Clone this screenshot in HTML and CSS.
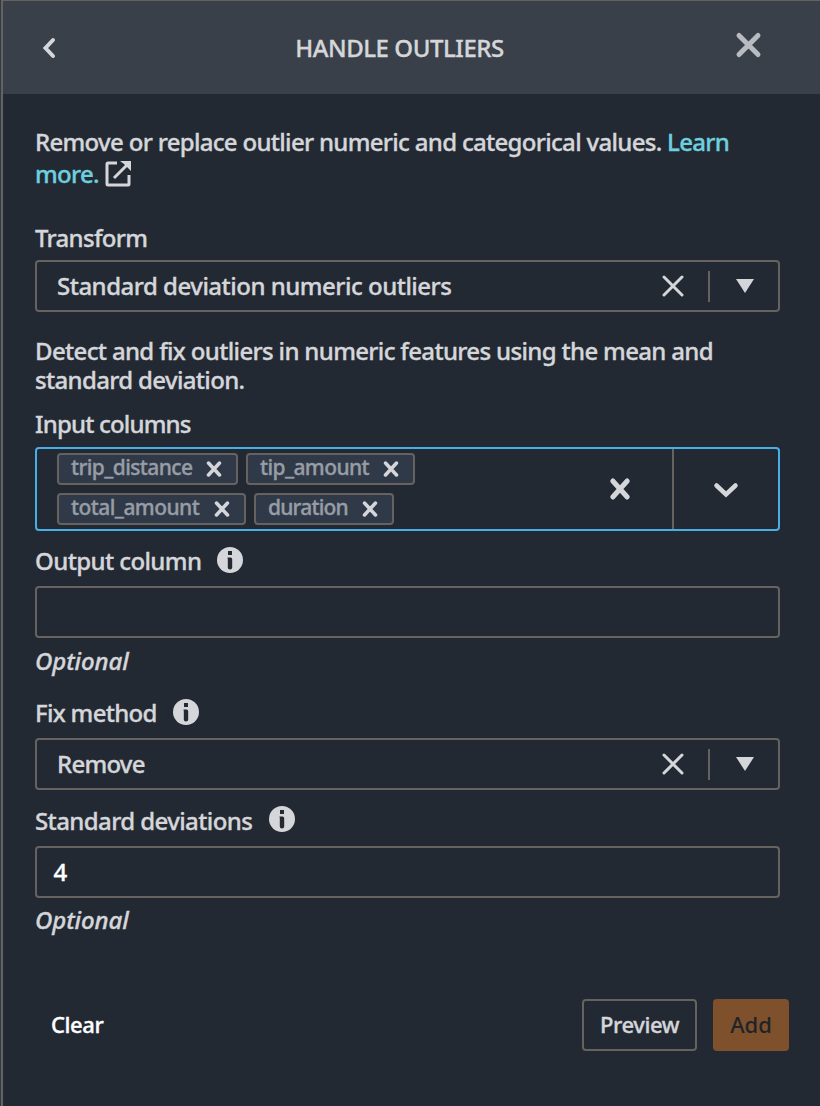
FILE: index.html
```
<!DOCTYPE html>
<html lang="en">
<head>
<meta charset="utf-8">
<title>Handle outliers</title>
<link rel="stylesheet" href="styles.css">
</head>
<body>
<main class="panel">
  <header class="header">
    <svg class="back" width="16" height="24" viewBox="0 0 16 24"><path d="M12 4 4.500 12l7.500 8"/></svg>
    <h1 class="title">HANDLE OUTLIERS</h1>
    <svg class="close" width="28" height="28" viewBox="0 0 28 28"><path d="m5 4.500 19 19m0-19-19 19"/></svg>
  </header>
  <form class="content">
    <p class="intro">Remove or replace outlier numeric and categorical values. <a class="link">Learn<br>more.</a><svg class="external" width="26" height="26" viewBox="0 0 26 26"><path d="M12 2H3Q2 2 2 3V23Q2 24 3 24H23Q24 24 24 23V14M9 17 22 4"/><path class="tip" d="M15 0h11v10l-3-3-4-4z"/></svg></p>

    <label class="label label-transform">Transform</label>
    <div class="box select">
      <span class="value value-transform">Standard deviation numeric outliers</span>
      <svg class="clear" width="22" height="22" viewBox="0 0 22 22"><path d="m2 2 18 18m0-18L2 20"/></svg>
      <i class="rule"></i>
      <svg class="arrow" width="18" height="14" viewBox="0 0 18 14"><path d="M0 0h18L9 14z"/></svg>
    </div>

    <p class="detail">Detect and fix outliers in numeric features using the mean and<br>standard deviation.</p>

    <label class="label label-input">Input columns</label>
    <div class="box multi">
      <div class="chips">
        <span class="chip chip-trip"><span class="chip-text">trip_distance</span><svg width="16" height="16" viewBox="0 0 16 16"><path d="m2.500 2 11 12m0-12-11 12"/></svg></span>
        <span class="chip chip-tip"><span class="chip-text">tip_amount</span><svg width="16" height="16" viewBox="0 0 16 16"><path d="m2.500 2 11 12m0-12-11 12"/></svg></span>
        <span class="chip chip-total"><span class="chip-text">total_amount</span><svg width="16" height="16" viewBox="0 0 16 16"><path d="m2.500 2 11 12m0-12-11 12"/></svg></span>
        <span class="chip chip-duration"><span class="chip-text">duration</span><svg width="16" height="16" viewBox="0 0 16 16"><path d="m2.500 2 11 12m0-12-11 12"/></svg></span>
      </div>
      <svg class="clear-all" width="22" height="24" viewBox="0 0 22 24"><path d="m3.800 4 14.400 16m0-16-14.400 16"/></svg>
      <div class="toggle"><svg width="26" height="18" viewBox="0 0 26 18"><path d="m3.500 4.500 9.500 9 9.500-9"/></svg></div>
    </div>

    <label class="label label-output"><span>Output column</span><svg class="info" width="26" height="26" viewBox="0 0 26 26"><circle cx="13" cy="13" r="13"/><path d="M11 4h4v4h-4zM10.500 10.500h3q1.700 0 1.700 1.700v8.300q0 2-2.200 2t-2.200-2v-8z"/></svg></label>
    <div class="box"></div>
    <p class="hint">Optional</p>

    <label class="label label-fix"><span>Fix method</span><svg class="info" width="26" height="26" viewBox="0 0 26 26"><circle cx="13" cy="13" r="13"/><path d="M11 4h4v4h-4zM10.500 10.500h3q1.700 0 1.700 1.700v8.300q0 2-2.200 2t-2.200-2v-8z"/></svg></label>
    <div class="box select">
      <span class="value value-fix">Remove</span>
      <svg class="clear" width="22" height="22" viewBox="0 0 22 22"><path d="m2 2 18 18m0-18L2 20"/></svg>
      <i class="rule"></i>
      <svg class="arrow" width="18" height="14" viewBox="0 0 18 14"><path d="M0 0h18L9 14z"/></svg>
    </div>

    <label class="label label-std"><span>Standard deviations</span><svg class="info" width="26" height="26" viewBox="0 0 26 26"><circle cx="13" cy="13" r="13"/><path d="M11 4h4v4h-4zM10.500 10.500h3q1.700 0 1.700 1.700v8.300q0 2-2.200 2t-2.200-2v-8z"/></svg></label>
    <div class="box number">4</div>
    <p class="hint hint-last">Optional</p>

    <div class="actions">
      <span class="button button-clear">Clear</span>
      <span class="button button-preview">Preview</span>
      <span class="button button-add">Add</span>
    </div>
  </form>
</main>
</body>
</html>
```
FILE: styles.css
```
* { box-sizing: border-box; }
html { background: #2e3a48; }
body { margin: 0; }
svg { display: block; flex: none; fill: none; stroke: #d5d6d9; stroke-width: 3; }
.panel {
  width: 819px; height: 1106px; overflow: hidden;
  background: #222933;
  border-left: 2px solid #66625f;
  margin-left: 1px;
  font: 500 24px/28px "Noto Sans", sans-serif;
  -webkit-text-stroke: 0.35px currentColor;
  color: #d5d6d9; white-space: nowrap;
}
.header {
  display: flex; align-items: center; justify-content: space-between;
  width: 817px; height: 94px; padding: 0 58px 0 38px;
  background: #394049; border-top: 1px solid #66625f;
}
.back { stroke-width: 4; stroke-linecap: round; }
.title { margin: 0 0 0 8px; font-size: 24px; font-weight: 500; letter-spacing: -0.45px; }
.close { stroke: #b8bbc2; stroke-width: 5; stroke-linecap: round; margin-top: -6px; }
.content { display: flex; flex-direction: column; width: 777px; padding: 32px 0 0 32px; }
p { margin: 0; }
.intro { height: 98px; line-height: 32px; letter-spacing: -0.69px; }
.link { color: #6fcfdf; }
.external { display: inline-block; vertical-align: -4px; margin-left: 6px; }
.external .tip { fill: #d5d6d9; stroke: none; }
.label { display: flex; height: 28px; align-items: center; letter-spacing: -0.6px; }
.label-transform { margin-bottom: 8px; letter-spacing: -0.7px; }
.box { width: 745px; height: 52px; flex: none; border: 2px solid #66625f; border-radius: 4px; }
.select { display: flex; align-items: center; padding-left: 20px; }
.value { flex: 1; letter-spacing: -0.5px; }
.value-fix { letter-spacing: -0.75px; }
.clear { margin-right: 24px; stroke-linecap: round; }
.rule { width: 2px; height: 31px; background: #66625f; margin-right: 26px; }
.arrow { fill: #d5d6d9; stroke: none; margin-right: 24px; }
.detail { height: 58px; margin: 24px 0 16px; line-height: 29px; letter-spacing: -0.66px; }
.label-input { margin-bottom: 9px; letter-spacing: -0.82px; }
.multi { display: flex; align-items: center; height: 84px; border-color: #48aee6; }
.chips { display: flex; flex-wrap: wrap; gap: 8px; width: 400px; padding-left: 20px; }
.chip {
  display: flex; align-items: center; justify-content: space-between;
  height: 32px; padding: 0 14px 0 12px; border: 2px solid #66625f; border-radius: 4px;
  background: #303948; color: #979da5; font-size: 21px; line-height: 28px;
  letter-spacing: -0.6px;
}
.chip-text { margin-top: -5px; }
.chip svg { stroke-width: 3.500; stroke-linecap: round; margin-top: -1px; }
.chip-trip { width: 181px; }
.chip-tip { width: 169px; }
.chip-total { width: 189px; letter-spacing: -0.55px; }
.chip-duration { width: 140px; letter-spacing: -0.8px; }
.clear-all { stroke-width: 5; stroke-linecap: round; margin: 0 41px 0 auto; }
.toggle { display: flex; align-items: center; justify-content: center; width: 106px; height: 80px; flex: none; border-left: 2px solid #66625f; }
.toggle svg { stroke-width: 4.500; stroke-linecap: round; margin-top: 2px; }
.label-output { margin: 16px 0 11px; }
.info { fill: #d5d6d9; stroke: none; margin: -2px 0 0 16px; }
.info path { fill: #222933; }
.hint { height: 28px; margin: 9px 0 24px; font-style: italic; letter-spacing: -0.1px; }
.label-fix { margin-bottom: 11px; letter-spacing: -0.7px; }
.label-std { margin: 17px 0 11px; }
.label-std .info { margin: -4px 0 0 17px; }
.number { padding: 10px 16.500px; color: #fff; }
.hint-last { margin: 8px 0 65px; }
.actions { display: flex; height: 52px; width: 754px; }
.button { display: flex; align-items: center; justify-content: center; border-radius: 4px; font-size: 22px; padding-bottom: 2px; letter-spacing: -0.4px; }
.button-clear { color: #fff; padding-left: 16px; margin-right: auto; }
.button-preview { width: 115px; border: 2px solid #66625f; margin-right: 16px; }
.button-add { width: 76px; background: #7f502c; color: #20242a; letter-spacing: -0.1px; -webkit-text-stroke: 0; }
```
